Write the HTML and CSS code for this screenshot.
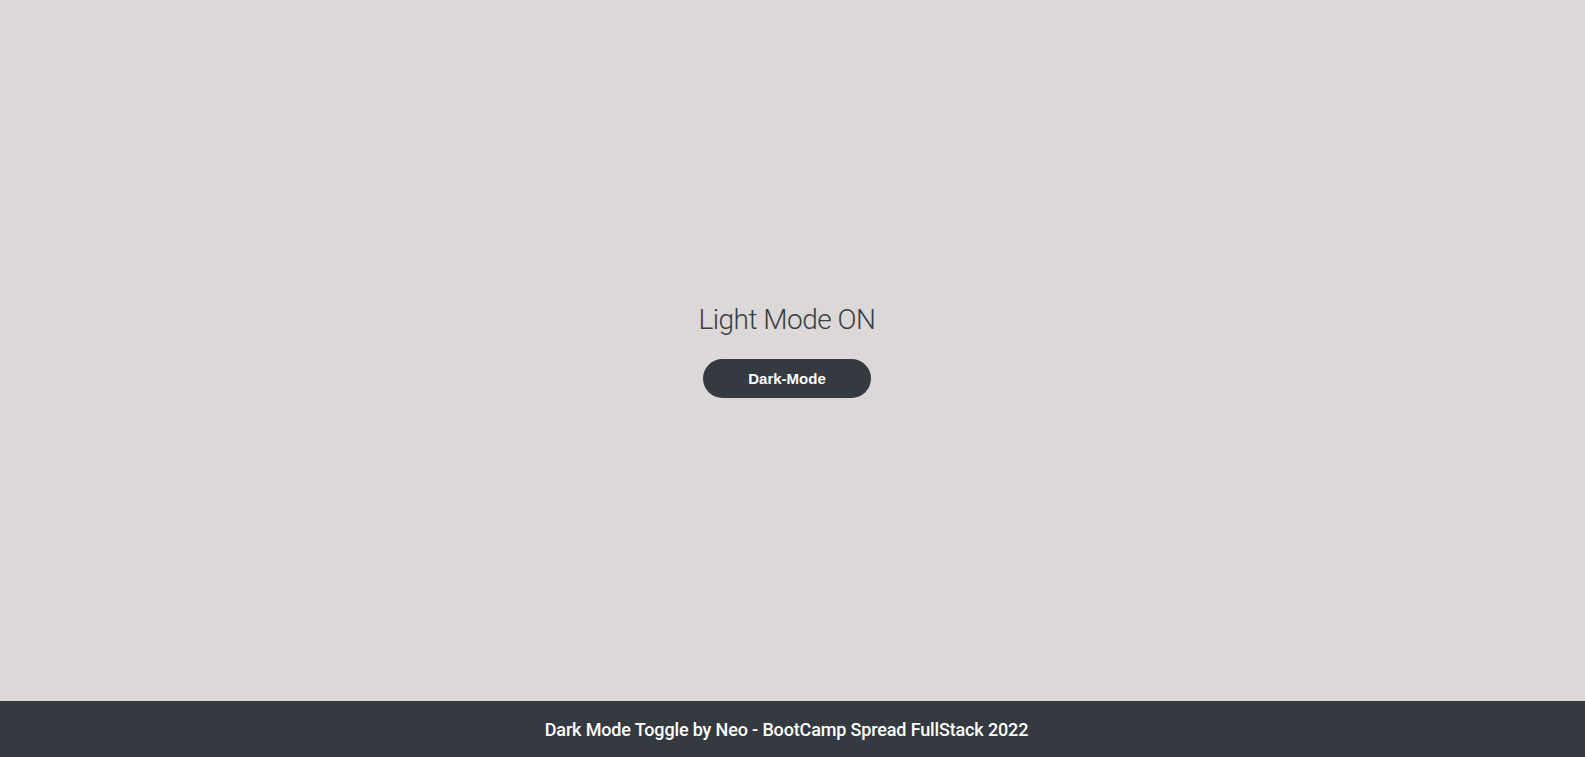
FILE: index.html
```html
<!DOCTYPE html>
<html lang="en">
<head>
<meta charset="utf-8">
<title>Dark Mode Toggle</title>
<link rel="stylesheet" href="styles.css">
</head>
<body>
<main class="main">
  <h1 class="title">Light Mode ON</h1>
  <button class="toggle" type="button">Dark-Mode</button>
</main>
<footer class="footer">
  <p class="footer-text">Dark Mode Toggle by Neo - BootCamp Spread FullStack 2022</p>
</footer>
</body>
</html>
```

FILE: styles.css
```css
* { box-sizing: border-box; }
html, body { margin: 0; padding: 0; height: 100%; }
body {
  background: #dcd8d7;
  font-family: Roboto, "Liberation Sans", sans-serif;
  display: flex;
  flex-direction: column;
  min-height: 100vh;
}
.main {
  flex: 1;
  display: flex;
  flex-direction: column;
  align-items: center;
  justify-content: center;
  padding-bottom: 2px;
  padding-right: 11px;
}
.title {
  margin: 0 0 21px;
  padding-top: 1px;
  font-weight: 300;
  font-size: 28px;
  line-height: 36px;
  letter-spacing: -0.5px;
  color: #3a3d42;
}
.toggle {
  width: 168px;
  height: 39px;
  border: none;
  border-radius: 20px;
  background: #343a40;
  color: #fff;
  font-family: "Liberation Sans", Arial, sans-serif;
  font-weight: bold;
  font-size: 15px;
  cursor: pointer;
}
.footer {
  height: 56px;
  background: #343a40;
  display: flex;
  align-items: center;
  justify-content: center;
  padding-right: 12px;
}
.footer-text {
  margin: 0;
  color: #fff;
  font-size: 18px;
  font-weight: 500;
  letter-spacing: -0.15px;
  font-family: Roboto, "Liberation Sans", sans-serif;
}
```
